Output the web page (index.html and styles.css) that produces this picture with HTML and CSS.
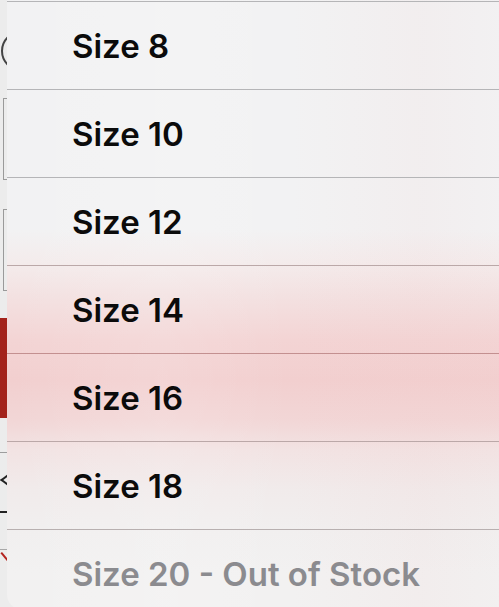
FILE: index.html
```html
<!DOCTYPE html>
<html lang="en">
<head>
    <meta charset="UTF-8">
    <meta name="viewport" content="width=device-width, initial-scale=1.0">
    <title>Size Picker</title>
    <link rel="stylesheet" href="styles.css">
</head>
<body>
    <!-- Product page underneath the menu -->
    <div class="page">
        <div class="avatar"></div>
        <div class="field"></div>
        <div class="field second"></div>
        <div class="add-button"></div>
        <div class="rule"></div>
        <div class="back-row"><span class="chevron"></span></div>
        <div class="rule dark"></div>
        <div class="rule low"></div>
        <div class="check-row"><span class="check"></span></div>
    </div>

    <!-- Size menu -->
    <div class="size-menu">
        <div class="size-option">Size 8</div>
        <div class="size-option">Size 10</div>
        <div class="size-option">Size 12</div>
        <div class="size-option">Size 14</div>
        <div class="size-option">Size 16</div>
        <div class="size-option">Size 18</div>
        <div class="size-option disabled">Size 20 - Out of Stock</div>
    </div>
</body>
</html>
```

FILE: styles.css
```css
body, html {
    margin: 0;
    padding: 0;
    height: 100%;
    overflow: hidden;
    font-family: Inter, "Liberation Sans", sans-serif;
}

body {
    position: relative;
    background-color: #ececec;
}

/* Page underneath */
.page {
    display: flex;
    flex-direction: column;
    width: 100%;
}

.avatar {
    width: 60px;
    height: 36px;
    margin: 31px 0 0 1px;
    border: 2px solid #444;
    border-radius: 30px;
}

.field {
    height: 80px;
    margin: 27px 0 0 3px;
    border: 1px solid #9a9a9a;
}

.field.second {
    margin-top: 29px;
}

.add-button {
    height: 100px;
    margin-top: 27px;
    background-color: #a3221b;
}

.rule {
    height: 1px;
    margin-top: 34px;
    background-color: #9d9d9d;
}

.rule.dark {
    height: 2px;
    margin-top: 21px;
    background-color: #222;
}

.rule.low {
    margin-top: 36px;
    background-color: #a8a8a8;
}

.back-row {
    height: 14px;
    margin-top: 23px;
    position: relative;
}

.chevron {
    position: absolute;
    left: 0;
    top: 4px;
    width: 12px;
    height: 12px;
    border-left: 2px solid #222;
    border-top: 2px solid #222;
    transform: rotate(-45deg) skew(8deg, 8deg);
    transform-origin: 0 0;
}

.check-row {
    height: 12px;
    margin-top: 2px;
    position: relative;
}

.check {
    position: absolute;
    left: 2px;
    top: 0;
    width: 10px;
    height: 2px;
    background-color: #b4231f;
    transform: rotate(50deg);
    transform-origin: 0 0;
}

/* Size menu - top edge sits above the window */
.size-menu {
    position: absolute;
    left: 7px;
    top: -20px;
    width: 520px;
    height: 629px;
    padding-top: 21px;
    box-sizing: border-box;
    border-radius: 14px;
    overflow: hidden;
    background:
        linear-gradient(90deg, rgba(255,255,255,0) 0%, rgba(255,255,255,0.12) 30%, rgba(255,255,255,0) 55%, rgba(240,200,200,0.1) 80%, rgba(255,255,255,0) 100%),
        linear-gradient(180deg, #f2f2f3 0px, #f2f2f3 250px, #f4ebeb 285px, #f3e0e0 320px, #f3d4d4 360px, #f2cfcf 400px, #f2d6d6 440px, #f2e3e3 470px, #f1ebeb 510px, #f1efef 550px, #f2f1f1 593px);
}

.size-option {
    height: 87px;
    flex-shrink: 0;
    display: flex;
    align-items: center;
    padding-left: 65px;
    border-top: 1px solid #b5b5b7;
    font-size: 33px;
    font-weight: 600;
    color: #0b0b0b;
}

.size-option:nth-child(4),
.size-option:nth-child(6) {
    border-top-color: #bba8a8;
}

.size-option:nth-child(5) {
    border-top-color: #c39090;
}

.size-option:nth-child(7) {
    border-top-color: #b8b0b0;
}

.size-option.disabled {
    color: #8b8b8f;
}
```
